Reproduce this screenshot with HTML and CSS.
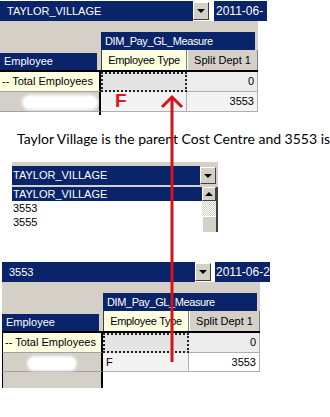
FILE: index.html
```html
<!DOCTYPE html>
<html lang="en">
<head>
    <meta charset="UTF-8">
    <meta name="viewport" content="width=device-width, initial-scale=1.0">
    <title>Cost Centre pivot</title>
    <link rel="stylesheet" href="styles.css">
</head>
<body>
    <div class="page">
        <!-- first capture: parent cost centre selected -->
        <div class="shot shot-top">
            <div class="toolbar">
                <div class="combo">TAYLOR_VILLAGE</div>
                <div class="drop-btn"><span class="tri-down"></span></div>
                <div class="date-box">2011-06-</div>
            </div>
            <div class="pivot">
                <div class="pivot-filter">
                    <div class="measure-head">DIM_Pay_GL_Measure</div>
                </div>
                <div class="pivot-head">
                    <div class="row-field"><span>Employee</span></div>
                    <div class="col-field">Employee Type</div>
                    <div class="col-item">Split Dept 1</div>
                </div>
                <div class="pivot-rows">
                    <div class="row-label total">-- Total Employees</div>
                    <div class="cell dotted"></div>
                    <div class="cell num">0</div>

                    <div class="row-label"><span class="smudge"></span></div>
                    <div class="cell light"></div>
                    <div class="cell num light">3553</div>

                    <div class="row-label tail"></div>
                </div>
            </div>
        </div>

        <p class="note">Taylor Village is the parent Cost Centre and 3553 is</p>

        <!-- the open drop down -->
        <div class="picker">
            <div class="picker-combo">
                <div class="combo">TAYLOR_VILLAGE</div>
                <div class="drop-btn"><span class="tri-down"></span></div>
            </div>
            <div class="picker-list">
                <ul class="options">
                    <li class="selected">TAYLOR_VILLAGE</li>
                    <li>3553</li>
                    <li>3555</li>
                </ul>
                <div class="scrollbar">
                    <div class="scroll-btn"><span class="tri-up"></span></div>
                    <div class="scroll-track"></div>
                    <div class="scroll-thumb"></div>
                </div>
            </div>
        </div>

        <!-- second capture: child cost centre selected -->
        <div class="shot shot-bottom">
            <div class="toolbar">
                <div class="combo">3553</div>
                <div class="drop-btn"><span class="tri-down"></span></div>
                <div class="date-box wide">2011-06-2</div>
            </div>
            <div class="pivot">
                <div class="pivot-filter">
                    <div class="measure-head">DIM_Pay_GL_Measure</div>
                </div>
                <div class="pivot-head">
                    <div class="row-field"><span>Employee</span></div>
                    <div class="col-field">Employee Type</div>
                    <div class="col-item">Split Dept 1</div>
                </div>
                <div class="pivot-rows">
                    <div class="row-label total">-- Total Employees</div>
                    <div class="cell dotted"></div>
                    <div class="cell num">0</div>

                    <div class="row-label"><span class="smudge small"></span></div>
                    <div class="cell light">F</div>
                    <div class="cell num white">3553</div>

                    <div class="row-label last"></div>
                </div>
            </div>
        </div>

        <!-- red annotations drawn over the screenshots -->
        <span class="mark-f">F</span>
        <svg class="arrow" width="30" height="275" viewBox="0 0 30 275">
            <line x1="15" y1="4" x2="15" y2="268" stroke="#d3141b" stroke-width="3"/>
            <polyline points="5,13 15,3 25,13" fill="none" stroke="#d3141b" stroke-width="3"/>
        </svg>
    </div>
</body>
</html>
```
FILE: styles.css
```css
body {
    margin: 0;
    background: #fff;
    font-family: "Liberation Sans", Arial, sans-serif;
    font-size: 11px;
    color: #000;
}
.page {
    position: relative;
    width: 330px;
    height: 417px;
    overflow: hidden;
}

/* combo + date toolbar */
.toolbar {
    display: flex;
    padding-top: 1px;
    height: 20px;
}
.combo {
    background: #0a246a;
    color: #fff;
    width: 186px;
    height: 20px;
    line-height: 20px;
    padding-left: 7px;
    white-space: nowrap;
}
.drop-btn {
    width: 14px;
    height: 16px;
    margin-top: 1px;
    background: #d4d0c8;
    border: 1px solid;
    border-color: #fff #404040 #404040 #fff;
    display: flex;
    align-items: center;
    justify-content: center;
}
.tri-down {
    width: 0;
    height: 0;
    border-left: 4px solid transparent;
    border-right: 4px solid transparent;
    border-top: 4px solid #000;
}
.tri-up {
    width: 0;
    height: 0;
    border-left: 4px solid transparent;
    border-right: 4px solid transparent;
    border-bottom: 4px solid #000;
}
.date-box {
    background: #0a246a;
    color: #fff;
    width: 51px;
    margin-left: 5px;
    padding-left: 2px;
    font-size: 12px;
    line-height: 20px;
    white-space: nowrap;
    overflow: hidden;
}
.date-box.wide {
    width: 54px;
    margin-left: 4px;
    padding-left: 1px;
}

/* pivot table */
.pivot {
    width: 258px;
}
.pivot-filter {
    background: #d4d0c8;
    height: 18px;
    padding: 11px 0 0 101px;
}
.measure-head {
    width: 150px;
    height: 18px;
    line-height: 18px;
    padding-left: 4px;
    background: #0a246a;
    color: #fff;
    letter-spacing: -0.4px;
}
.pivot-head {
    display: grid;
    grid-template-columns: 101px 86px 71px;
    height: 20px;
    background: #d4d0c8;
    border-bottom: 2px solid #000;
}
.row-field {
    padding-top: 3px;
}
.row-field span {
    display: block;
    width: 93px;
    height: 17px;
    line-height: 17px;
    padding-left: 4px;
    background: #0a246a;
    color: #fff;
}
.col-field {
    background: #ffffe1;
    border-left: 1px solid #404040;
    border-right: 1px solid #808080;
    line-height: 20px;
    text-align: center;
    letter-spacing: -0.3px;
}
.col-item {
    background: #d4d0c8;
    border-left: 1px solid #fff;
    border-right: 1px solid #808080;
    line-height: 20px;
    text-align: center;
}
.pivot-rows {
    display: grid;
    grid-template-columns: 101px 86px 71px;
    grid-template-rows: 20px 20px 3px;
}
.shot-bottom .pivot-rows {
    grid-template-rows: 20px 19px 16px;
}
.row-label {
    position: relative;
    background: #d4d0c8;
    border-right: 2px solid #000;
    border-bottom: 1px solid #a0a0a0;
    padding-left: 2px;
    line-height: 19px;
    white-space: nowrap;
}
.row-label.total {
    background: #ffffe1;
}
.row-label.tail {
    border-bottom: none;
    background: #fff;
}
.row-label.last {
    border-bottom: none;
}
.cell {
    background: #ececec;
    border-right: 1px solid #b0b0b0;
    border-bottom: 1px solid #b0b0b0;
    line-height: 18px;
    padding: 0 3px;
}
.cell.num {
    text-align: right;
}
.cell.light {
    background: #f3f3f3;
}
.cell.white {
    background: #fff;
}
.cell.dotted {
    background: #e4e4e4;
    border: 2px dotted #222;
}
.smudge {
    position: absolute;
    left: 24px;
    top: 5px;
    width: 72px;
    height: 11px;
    border-radius: 6px;
    background: #fff;
    box-shadow: 0 0 3px 2px #fff;
}
.smudge.small {
    width: 46px;
    left: 26px;
}

.shot-bottom {
    margin-top: 29px;
    margin-left: 2px;
}
.shot-bottom .row-label {
    border-left: 1px solid #000;
}

/* explanation line */
.note {
    margin: 15px 0 0 17px;
    font-family: Lato, "Open Sans", sans-serif;
    font-size: 14px;
    line-height: 17px;
    white-space: nowrap;
}

/* opened drop down list */
.picker {
    margin: 15px 0 0 12px;
    width: 206px;
}
.picker-combo {
    display: flex;
    background: #d4d0c8;
    padding: 4px 2px 2px 0;
}
.picker-combo .combo {
    width: 190px;
    height: 19px;
    line-height: 19px;
    padding-left: 1px;
}
.picker-combo .drop-btn {
    height: 15px;
    margin-top: 1px;
}
.picker-list {
    display: flex;
    height: 45px;
    border-right: 2px solid #404040;
}
.options {
    list-style: none;
    margin: 0;
    padding: 0;
    flex: 1;
}
.options li {
    height: 14px;
    line-height: 14px;
    padding-left: 1px;
}
.options li.selected {
    background: #0a246a;
    color: #fff;
}
.scrollbar {
    width: 14px;
    display: flex;
    flex-direction: column;
}
.scroll-btn {
    height: 12px;
    background: #d4d0c8;
    border: 1px solid;
    border-color: #fff #404040 #404040 #fff;
    display: flex;
    align-items: center;
    justify-content: center;
}
.scroll-track {
    height: 15px;
    background: repeating-conic-gradient(#fff 0 25%, #d4d0c8 0 50%) 0 0 / 2px 2px;
}
.scroll-thumb {
    flex: 1;
    background: #d4d0c8;
    border-top: 1px solid #fff;
    border-left: 1px solid #fff;
}

/* red hand drawn marks */
.mark-f {
    position: absolute;
    left: 115px;
    top: 90px;
    color: #e0141c;
    font-family: "Liberation Sans", Arial, sans-serif;
    font-weight: bold;
    font-size: 19px;
}
.arrow {
    position: absolute;
    left: 157px;
    top: 94px;
}
```
